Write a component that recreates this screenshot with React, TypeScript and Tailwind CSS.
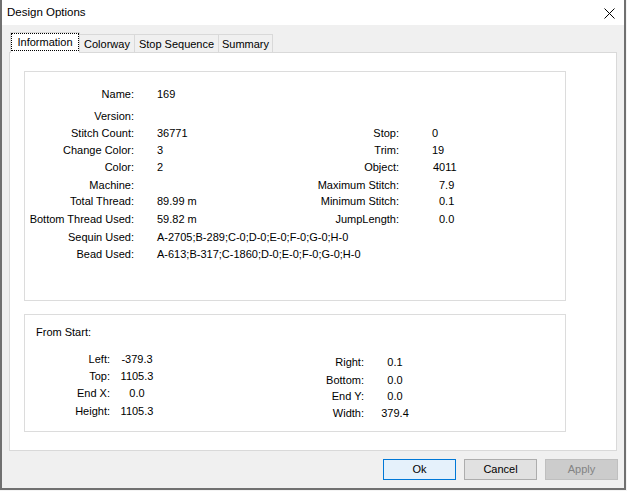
import React from 'react';

type Row = {
  l: string;
  v: string;
  rl?: string;
  rv?: string;
  h: string;
  rvCls?: string;
};

const infoRows: Row[] = [
  { l: 'Name:', v: '169', h: 'h-[22px]' },
  { l: 'Version:', v: '', h: 'h-[17px]' },
  { l: 'Stitch Count:', v: '36771', rl: 'Stop:', rv: '0', h: 'h-[17px]' },
  { l: 'Change Color:', v: '3', rl: 'Trim:', rv: '19', h: 'h-[17px]' },
  { l: 'Color:', v: '2', rl: 'Object:', rv: '4011', h: 'h-[18px]', rvCls: 'pl-[1px]' },
  { l: 'Machine:', v: '', rl: 'Maximum Stitch:', rv: '7.9', h: 'h-[16px]', rvCls: 'pl-[7px]' },
  { l: 'Total Thread:', v: '89.99 m', rl: 'Minimum Stitch:', rv: '0.1', h: 'h-[18px]', rvCls: 'pl-[7px]' },
  { l: 'Bottom Thread Used:', v: '59.82 m', rl: 'JumpLength:', rv: '0.0', h: 'h-[18px]', rvCls: 'pl-[7px]' },
  { l: 'Sequin Used:', v: 'A-2705;B-289;C-0;D-0;E-0;F-0;G-0;H-0', h: 'h-[17px]' },
  { l: 'Bead Used:', v: 'A-613;B-317;C-1860;D-0;E-0;F-0;G-0;H-0', h: 'h-[17px]' },
];

const startLeft = [
  { l: 'Left:', v: '-379.3', h: 'h-[17px]' },
  { l: 'Top:', v: '1105.3', h: 'h-[17px]' },
  { l: 'End X:', v: '0.0', h: 'h-[18px]' },
  { l: 'Height:', v: '1105.3', h: 'h-[17px]' },
];

const startRight = [
  { l: 'Right:', v: '0.1', h: 'h-[18px]' },
  { l: 'Bottom:', v: '0.0', h: 'h-[16px]' },
  { l: 'End Y:', v: '0.0', h: 'h-[17px]' },
  { l: 'Width:', v: '379.4', h: 'h-[17px]' },
];

const App: React.FC = () => {
  return (
    <div className="w-[627px] h-[491px] bg-[#f4f4f4] font-['Liberation_Sans',Arial,sans-serif] text-[11px] text-black leading-[17px]">
      <div className="w-[626px] h-[490px] flex flex-col bg-[#f0f0f0] border-l-2 border-r-2 border-b-2 border-[#707070]">
        {/* Title bar */}
        <div className="h-[25px] bg-white flex items-center justify-between pl-[5px] pr-[9px]">
          <span className="text-[11.5px]">Design Options</span>
          <svg width="11" height="11" viewBox="0 0 11 11" className="mt-[1px]">
            <path d="M0.5 0.5 L10.5 10.5 M10.5 0.5 L0.5 10.5" stroke="#000" strokeWidth="1" />
          </svg>
        </div>

        {/* Tabs */}
        <div className="ml-[7px] mt-[7px] flex items-end">
          <div className="relative z-10 -mb-px ml-px h-[21px] w-[70px] bg-white border border-b-0 border-[#d9d9d9] p-px">
            <div className="h-[16px] w-full outline-1 outline-dotted outline-black flex items-center justify-center leading-[16px]">
              Information
            </div>
          </div>
          <div className="h-[18px] w-[56px] -ml-px bg-[#f0f0f0] border border-b-0 border-[#d9d9d9] flex items-center justify-center pt-px">
            Colorway
          </div>
          <div className="h-[18px] w-[85px] -ml-px bg-[#f0f0f0] border border-b-0 border-[#d9d9d9] flex items-center justify-center pt-px">
            Stop Sequence
          </div>
          <div className="h-[18px] w-[55px] -ml-px bg-[#f0f0f0] border border-b-0 border-[#d9d9d9] flex items-center justify-center pt-px">
            Summary
          </div>
        </div>

        {/* Tab panel */}
        <div className="ml-[7px] w-[608px] h-[399px] bg-white border border-[#d9d9d9] pt-[18px] pl-[14px]">
          {/* General group */}
          <div className="w-[542px] h-[230px] border border-[#dcdcdc] pt-[14px]">
            {infoRows.map((r) => (
              <div key={r.l} className={`flex ${r.h}`}>
                <div className="w-[109px] shrink-0 text-right">{r.l}</div>
                <div className="ml-[23px] w-[123px] shrink-0 whitespace-nowrap">{r.v}</div>
                {r.rl && (
                  <>
                    <div className="w-[119px] shrink-0 text-right">{r.rl}</div>
                    <div className={`ml-[33px] ${r.rvCls ?? ''}`}>{r.rv}</div>
                  </>
                )}
              </div>
            ))}
          </div>

          {/* From start group */}
          <div className="mt-[13px] w-[542px] h-[118px] border border-[#dcdcdc] pt-[9px]">
            <div className="pl-[11px] h-[17px]">From Start:</div>
            <div className="flex">
              <div className="mt-[10px]">
                {startLeft.map((r) => (
                  <div key={r.l} className={`flex ${r.h}`}>
                    <div className="w-[85px] text-right">{r.l}</div>
                    <div className="ml-[7px] w-[40px] text-center">{r.v}</div>
                  </div>
                ))}
              </div>
              <div className="ml-[137px] mt-[13px]">
                {startRight.map((r) => (
                  <div key={r.l} className={`flex ${r.h}`}>
                    <div className="w-[70px] text-right">{r.l}</div>
                    <div className="ml-[11px] w-[40px] text-center">{r.v}</div>
                  </div>
                ))}
              </div>
            </div>
          </div>
        </div>

        {/* Buttons */}
        <div className="mt-[8px] flex justify-end gap-[8px] pr-[6px]">
          <button className="w-[73px] h-[21px] bg-[#e5f1fb] border border-[#0078d7] leading-[19px]">Ok</button>
          <button className="w-[73px] h-[21px] bg-[#e1e1e1] border border-[#adadad] leading-[19px]">Cancel</button>
          <button className="w-[73px] h-[21px] bg-[#cccccc] border border-[#bfbfbf] text-[#838383] leading-[19px]">Apply</button>
        </div>
      </div>
    </div>
  );
};

export default App;
